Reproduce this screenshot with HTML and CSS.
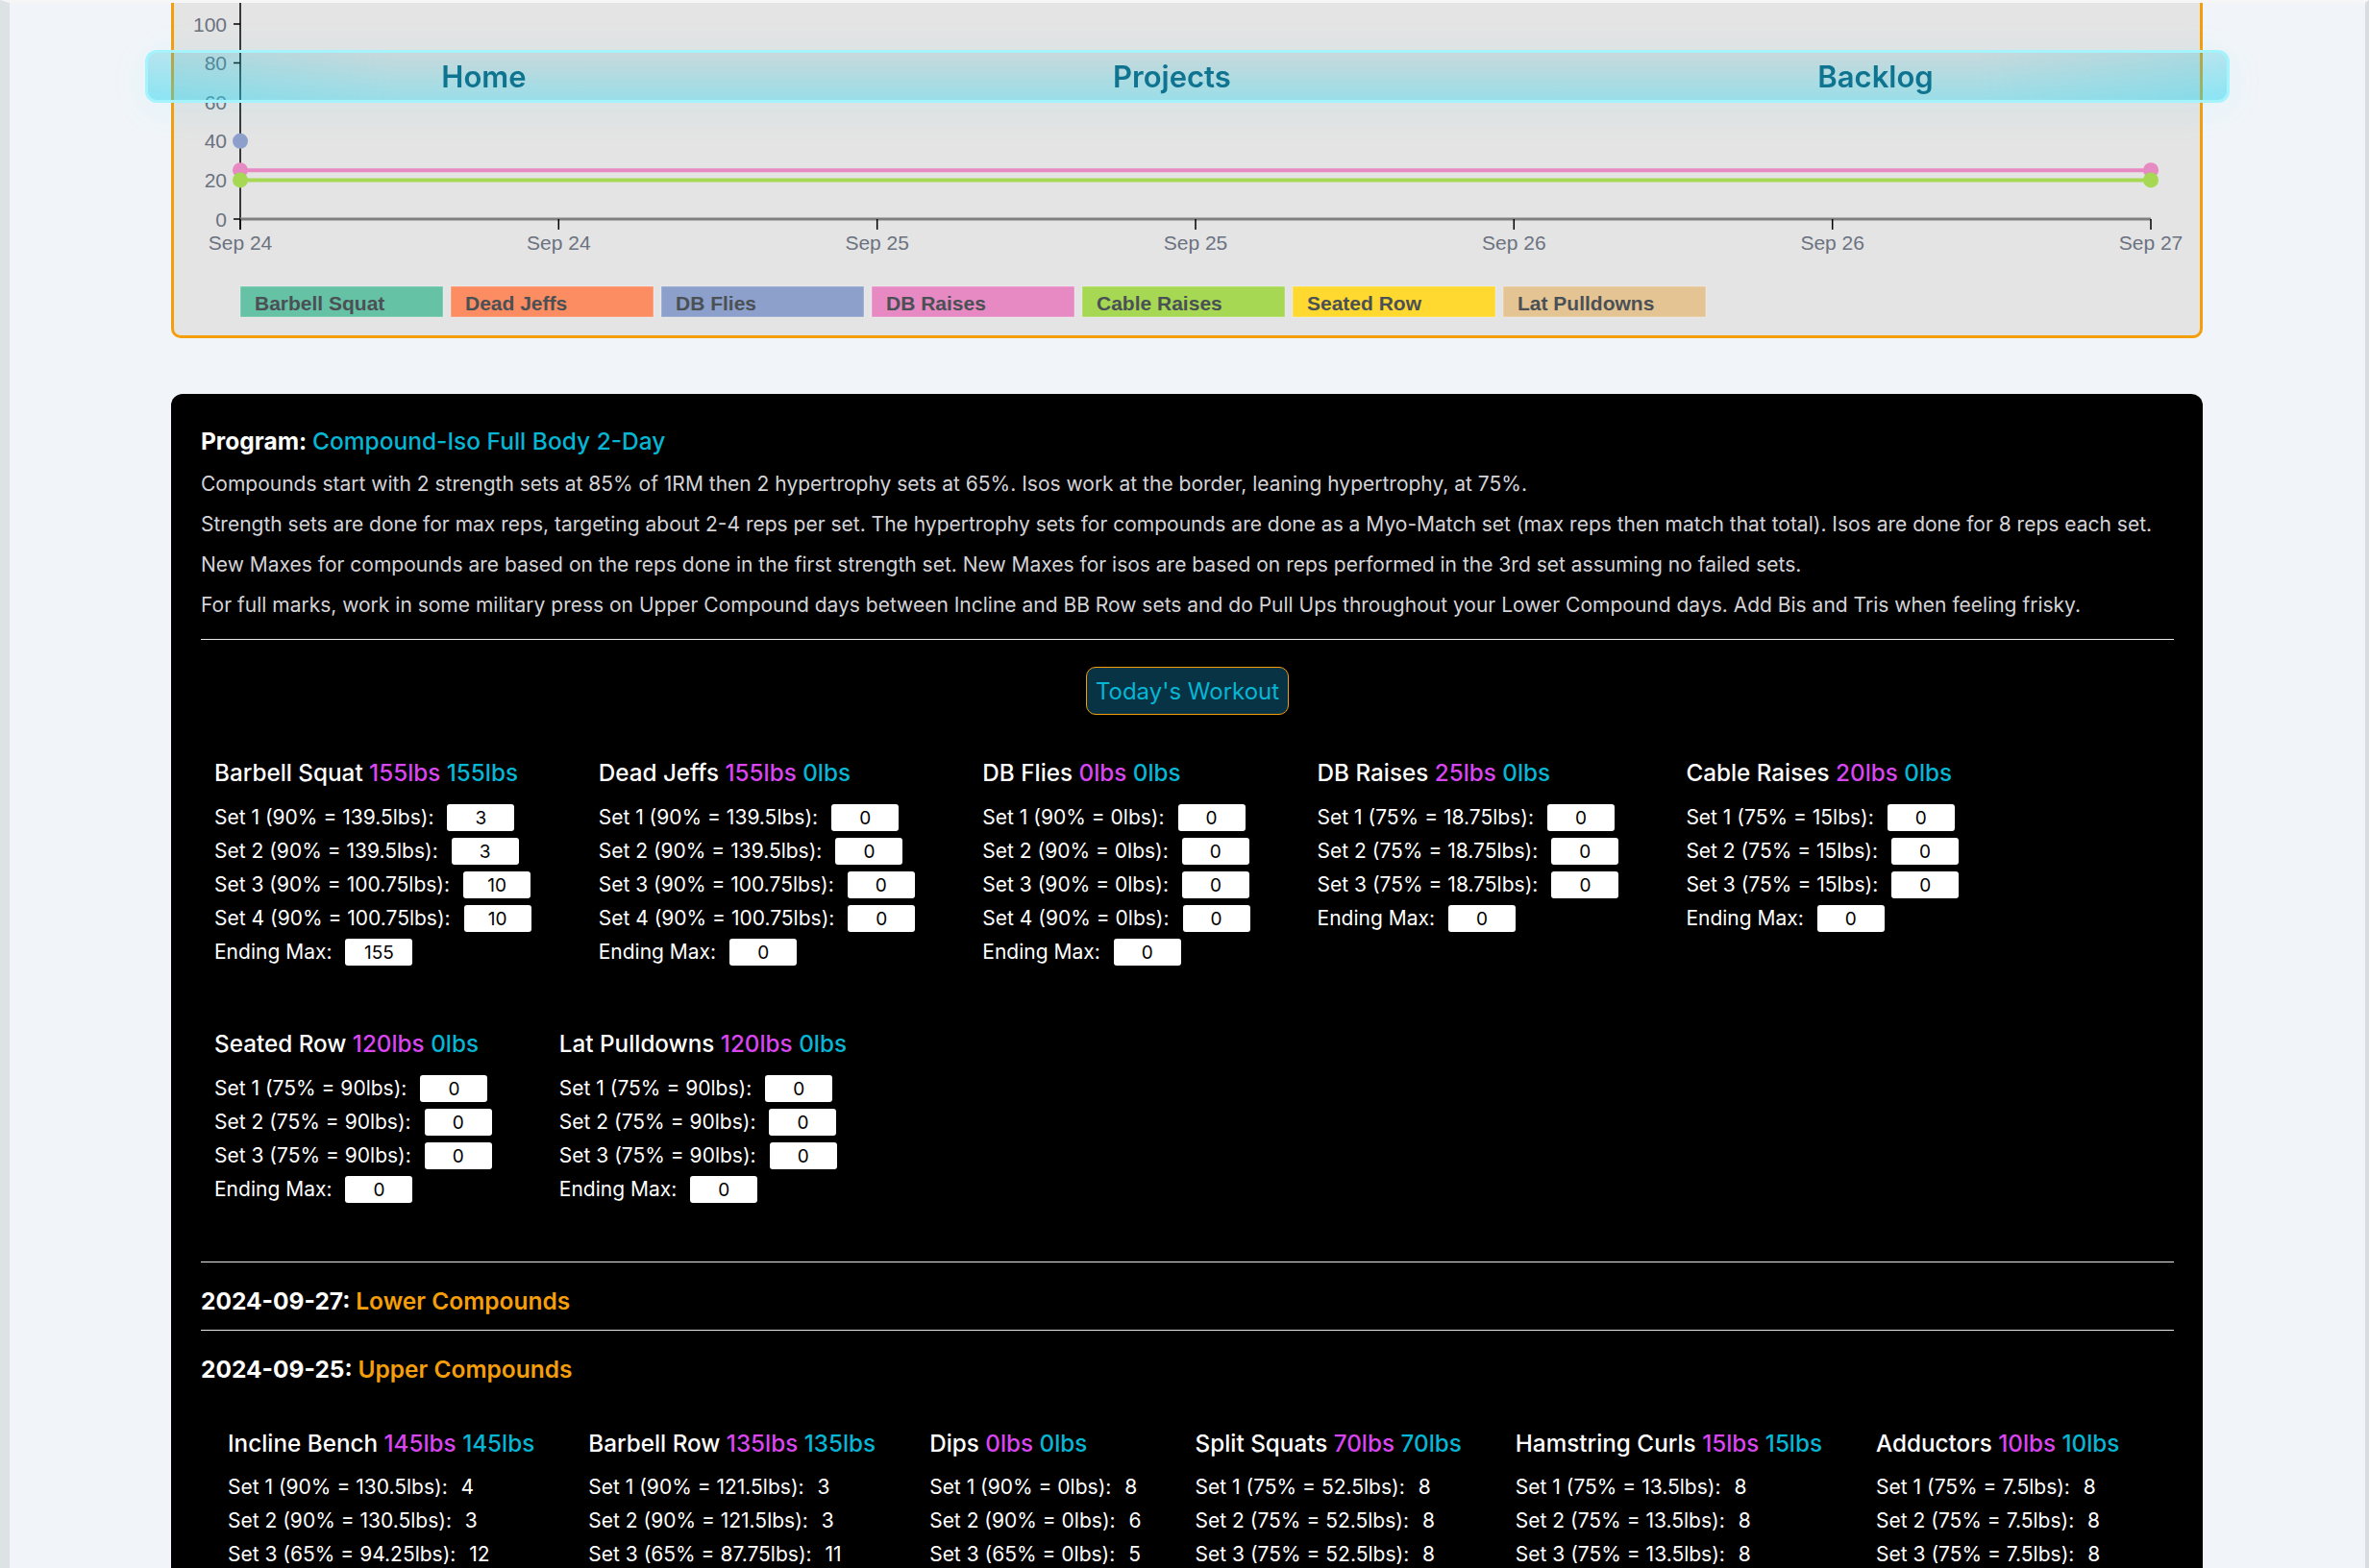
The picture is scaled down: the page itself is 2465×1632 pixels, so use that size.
FILE: index.html
```html
<!DOCTYPE html>
<html lang="en">
<head>
<meta charset="utf-8">
<title>Workout Tracker</title>
<link rel="stylesheet" href="styles.css">
</head>
<body>
<div class="frame">
  <nav class="topnav">
    <a class="nav-link" href="#">Home</a>
    <a class="nav-link" href="#">Projects</a>
    <a class="nav-link" href="#">Backlog</a>
  </nav>

  <main class="container">
    <section class="chart-card">
      <svg class="chart" width="2108" height="346" viewBox="0 0 2108 346" xmlns="http://www.w3.org/2000/svg">
        <g class="y-axis">
          <line x1="69" y1="0" x2="69" y2="236" stroke="#000" stroke-width="1.5"/>
          <line x1="62" y1="22" x2="69" y2="22" stroke="#000" stroke-width="1.5"/>
          <line x1="62" y1="62.6" x2="69" y2="62.6" stroke="#000" stroke-width="1.5"/>
          <line x1="62" y1="103.2" x2="69" y2="103.2" stroke="#000" stroke-width="1.5"/>
          <line x1="62" y1="143.8" x2="69" y2="143.8" stroke="#000" stroke-width="1.5"/>
          <line x1="62" y1="184.4" x2="69" y2="184.4" stroke="#000" stroke-width="1.5"/>
          <line x1="62" y1="225" x2="69" y2="225" stroke="#000" stroke-width="1.5"/>
          <text class="tick" x="55" y="29.5" text-anchor="end">100</text>
          <text class="tick" x="55" y="70" text-anchor="end">80</text>
          <text class="tick" x="55" y="110.7" text-anchor="end">60</text>
          <text class="tick" x="55" y="151.3" text-anchor="end">40</text>
          <text class="tick" x="55" y="191.9" text-anchor="end">20</text>
          <text class="tick" x="55" y="232.5" text-anchor="end">0</text>
        </g>
        <g class="x-axis">
          <line x1="69" y1="225" x2="2057" y2="225" stroke="#808080" stroke-width="3"/>
          <line x1="69" y1="225" x2="69" y2="236" stroke="#000" stroke-width="1.5"/>
          <line x1="400.3" y1="225" x2="400.3" y2="236" stroke="#000" stroke-width="1.5"/>
          <line x1="731.7" y1="225" x2="731.7" y2="236" stroke="#000" stroke-width="1.5"/>
          <line x1="1063" y1="225" x2="1063" y2="236" stroke="#000" stroke-width="1.5"/>
          <line x1="1394.3" y1="225" x2="1394.3" y2="236" stroke="#000" stroke-width="1.5"/>
          <line x1="1725.7" y1="225" x2="1725.7" y2="236" stroke="#000" stroke-width="1.5"/>
          <line x1="2057" y1="225" x2="2057" y2="236" stroke="#000" stroke-width="1.5"/>
          <text class="tick" x="69" y="256.5" text-anchor="middle">Sep 24</text>
          <text class="tick" x="400.3" y="256.5" text-anchor="middle">Sep 24</text>
          <text class="tick" x="731.7" y="256.5" text-anchor="middle">Sep 25</text>
          <text class="tick" x="1063" y="256.5" text-anchor="middle">Sep 25</text>
          <text class="tick" x="1394.3" y="256.5" text-anchor="middle">Sep 26</text>
          <text class="tick" x="1725.7" y="256.5" text-anchor="middle">Sep 26</text>
          <text class="tick" x="2057" y="256.5" text-anchor="middle">Sep 27</text>
        </g>
        <g class="series">
          <line x1="69" y1="174.2" x2="2057" y2="174.2" stroke="#e78ac3" stroke-width="4"/>
          <line x1="69" y1="184.4" x2="2057" y2="184.4" stroke="#a6d854" stroke-width="4"/>
          <circle cx="69" cy="143.8" r="8" fill="#8da0cb"/>
          <circle cx="69" cy="174.2" r="8" fill="#e78ac3"/>
          <circle cx="2057" cy="174.2" r="8" fill="#e78ac3"/>
          <circle cx="69" cy="184.4" r="8" fill="#a6d854"/>
          <circle cx="2057" cy="184.4" r="8" fill="#a6d854"/>
        </g>
        <g class="legend">
          <rect x="69" y="295" width="211" height="32" fill="#66c2a5" stroke="rgba(255,255,255,0.35)" stroke-width="1"/>
          <text class="legend-label" x="84" y="320">Barbell Squat</text>
          <rect x="288" y="295" width="211" height="32" fill="#fc8d62" stroke="rgba(255,255,255,0.35)" stroke-width="1"/>
          <text class="legend-label" x="303" y="320">Dead Jeffs</text>
          <rect x="507" y="295" width="211" height="32" fill="#8da0cb" stroke="rgba(255,255,255,0.35)" stroke-width="1"/>
          <text class="legend-label" x="522" y="320">DB Flies</text>
          <rect x="726" y="295" width="211" height="32" fill="#e78ac3" stroke="rgba(255,255,255,0.35)" stroke-width="1"/>
          <text class="legend-label" x="741" y="320">DB Raises</text>
          <rect x="945" y="295" width="211" height="32" fill="#a6d854" stroke="rgba(255,255,255,0.35)" stroke-width="1"/>
          <text class="legend-label" x="960" y="320">Cable Raises</text>
          <rect x="1164" y="295" width="211" height="32" fill="#ffd92f" stroke="rgba(255,255,255,0.35)" stroke-width="1"/>
          <text class="legend-label" x="1179" y="320">Seated Row</text>
          <rect x="1383" y="295" width="211" height="32" fill="#e5c494" stroke="rgba(255,255,255,0.35)" stroke-width="1"/>
          <text class="legend-label" x="1398" y="320">Lat Pulldowns</text>
        </g>
      </svg>
    </section>

    <section class="program-card">
      <h2 class="program-title">Program: <span class="accent-cyan">Compound-Iso Full Body 2-Day</span></h2>
      <p class="desc">Compounds start with 2 strength sets at 85% of 1RM then 2 hypertrophy sets at 65%. Isos work at the border, leaning hypertrophy, at 75%.</p>
      <p class="desc">Strength sets are done for max reps, targeting about 2-4 reps per set. The hypertrophy sets for compounds are done as a Myo-Match set (max reps then match that total). Isos are done for 8 reps each set.</p>
      <p class="desc">New Maxes for compounds are based on the reps done in the first strength set. New Maxes for isos are based on reps performed in the 3rd set assuming no failed sets.</p>
      <p class="desc">For full marks, work in some military press on Upper Compound days between Incline and BB Row sets and do Pull Ups throughout your Lower Compound days. Add Bis and Tris when feeling frisky.</p>

      <hr class="rule rule-top">

      <div class="btn-row">
        <button class="today-btn" type="button">Today's Workout</button>
      </div>

      <div class="today-grid">
        <div class="ex">
          <h3 class="ex-title">Barbell Squat <span class="accent-mag">155lbs</span> <span class="accent-cyan">155lbs</span></h3>
          <div class="set-row"><label>Set 1 (90% = 139.5lbs):</label><input class="rep" type="text" value="3"></div>
          <div class="set-row"><label>Set 2 (90% = 139.5lbs):</label><input class="rep" type="text" value="3"></div>
          <div class="set-row"><label>Set 3 (90% = 100.75lbs):</label><input class="rep" type="text" value="10"></div>
          <div class="set-row"><label>Set 4 (90% = 100.75lbs):</label><input class="rep" type="text" value="10"></div>
          <div class="set-row"><label>Ending Max:</label><input class="rep" type="text" value="155"></div>
        </div>
        <div class="ex">
          <h3 class="ex-title">Dead Jeffs <span class="accent-mag">155lbs</span> <span class="accent-cyan">0lbs</span></h3>
          <div class="set-row"><label>Set 1 (90% = 139.5lbs):</label><input class="rep" type="text" value="0"></div>
          <div class="set-row"><label>Set 2 (90% = 139.5lbs):</label><input class="rep" type="text" value="0"></div>
          <div class="set-row"><label>Set 3 (90% = 100.75lbs):</label><input class="rep" type="text" value="0"></div>
          <div class="set-row"><label>Set 4 (90% = 100.75lbs):</label><input class="rep" type="text" value="0"></div>
          <div class="set-row"><label>Ending Max:</label><input class="rep" type="text" value="0"></div>
        </div>
        <div class="ex">
          <h3 class="ex-title">DB Flies <span class="accent-mag">0lbs</span> <span class="accent-cyan">0lbs</span></h3>
          <div class="set-row"><label>Set 1 (90% = 0lbs):</label><input class="rep" type="text" value="0"></div>
          <div class="set-row"><label>Set 2 (90% = 0lbs):</label><input class="rep" type="text" value="0"></div>
          <div class="set-row"><label>Set 3 (90% = 0lbs):</label><input class="rep" type="text" value="0"></div>
          <div class="set-row"><label>Set 4 (90% = 0lbs):</label><input class="rep" type="text" value="0"></div>
          <div class="set-row"><label>Ending Max:</label><input class="rep" type="text" value="0"></div>
        </div>
        <div class="ex">
          <h3 class="ex-title">DB Raises <span class="accent-mag">25lbs</span> <span class="accent-cyan">0lbs</span></h3>
          <div class="set-row"><label>Set 1 (75% = 18.75lbs):</label><input class="rep" type="text" value="0"></div>
          <div class="set-row"><label>Set 2 (75% = 18.75lbs):</label><input class="rep" type="text" value="0"></div>
          <div class="set-row"><label>Set 3 (75% = 18.75lbs):</label><input class="rep" type="text" value="0"></div>
          <div class="set-row"><label>Ending Max:</label><input class="rep" type="text" value="0"></div>
        </div>
        <div class="ex">
          <h3 class="ex-title">Cable Raises <span class="accent-mag">20lbs</span> <span class="accent-cyan">0lbs</span></h3>
          <div class="set-row"><label>Set 1 (75% = 15lbs):</label><input class="rep" type="text" value="0"></div>
          <div class="set-row"><label>Set 2 (75% = 15lbs):</label><input class="rep" type="text" value="0"></div>
          <div class="set-row"><label>Set 3 (75% = 15lbs):</label><input class="rep" type="text" value="0"></div>
          <div class="set-row"><label>Ending Max:</label><input class="rep" type="text" value="0"></div>
        </div>
        <div class="ex">
          <h3 class="ex-title">Seated Row <span class="accent-mag">120lbs</span> <span class="accent-cyan">0lbs</span></h3>
          <div class="set-row"><label>Set 1 (75% = 90lbs):</label><input class="rep" type="text" value="0"></div>
          <div class="set-row"><label>Set 2 (75% = 90lbs):</label><input class="rep" type="text" value="0"></div>
          <div class="set-row"><label>Set 3 (75% = 90lbs):</label><input class="rep" type="text" value="0"></div>
          <div class="set-row"><label>Ending Max:</label><input class="rep" type="text" value="0"></div>
        </div>
        <div class="ex">
          <h3 class="ex-title">Lat Pulldowns <span class="accent-mag">120lbs</span> <span class="accent-cyan">0lbs</span></h3>
          <div class="set-row"><label>Set 1 (75% = 90lbs):</label><input class="rep" type="text" value="0"></div>
          <div class="set-row"><label>Set 2 (75% = 90lbs):</label><input class="rep" type="text" value="0"></div>
          <div class="set-row"><label>Set 3 (75% = 90lbs):</label><input class="rep" type="text" value="0"></div>
          <div class="set-row"><label>Ending Max:</label><input class="rep" type="text" value="0"></div>
        </div>
      </div>

      <hr class="rule">
      <h3 class="day">2024-09-27: <span class="accent-orange">Lower Compounds</span></h3>
      <hr class="rule">
      <h3 class="day">2024-09-25: <span class="accent-orange">Upper Compounds</span></h3>

      <div class="hist-grid">
        <div class="hist-ex">
          <h4 class="ex-title">Incline Bench <span class="accent-mag">145lbs</span> <span class="accent-cyan">145lbs</span></h4>
          <p class="hist-set">Set 1 (90% = 130.5lbs): <span class="hist-val">4</span></p>
          <p class="hist-set">Set 2 (90% = 130.5lbs): <span class="hist-val">3</span></p>
          <p class="hist-set">Set 3 (65% = 94.25lbs): <span class="hist-val">12</span></p>
        </div>
        <div class="hist-ex">
          <h4 class="ex-title">Barbell Row <span class="accent-mag">135lbs</span> <span class="accent-cyan">135lbs</span></h4>
          <p class="hist-set">Set 1 (90% = 121.5lbs): <span class="hist-val">3</span></p>
          <p class="hist-set">Set 2 (90% = 121.5lbs): <span class="hist-val">3</span></p>
          <p class="hist-set">Set 3 (65% = 87.75lbs): <span class="hist-val">11</span></p>
        </div>
        <div class="hist-ex">
          <h4 class="ex-title">Dips <span class="accent-mag">0lbs</span> <span class="accent-cyan">0lbs</span></h4>
          <p class="hist-set">Set 1 (90% = 0lbs): <span class="hist-val">8</span></p>
          <p class="hist-set">Set 2 (90% = 0lbs): <span class="hist-val">6</span></p>
          <p class="hist-set">Set 3 (65% = 0lbs): <span class="hist-val">5</span></p>
        </div>
        <div class="hist-ex">
          <h4 class="ex-title">Split Squats <span class="accent-mag">70lbs</span> <span class="accent-cyan">70lbs</span></h4>
          <p class="hist-set">Set 1 (75% = 52.5lbs): <span class="hist-val">8</span></p>
          <p class="hist-set">Set 2 (75% = 52.5lbs): <span class="hist-val">8</span></p>
          <p class="hist-set">Set 3 (75% = 52.5lbs): <span class="hist-val">8</span></p>
        </div>
        <div class="hist-ex">
          <h4 class="ex-title">Hamstring Curls <span class="accent-mag">15lbs</span> <span class="accent-cyan">15lbs</span></h4>
          <p class="hist-set">Set 1 (75% = 13.5lbs): <span class="hist-val">8</span></p>
          <p class="hist-set">Set 2 (75% = 13.5lbs): <span class="hist-val">8</span></p>
          <p class="hist-set">Set 3 (75% = 13.5lbs): <span class="hist-val">8</span></p>
        </div>
        <div class="hist-ex">
          <h4 class="ex-title">Adductors <span class="accent-mag">10lbs</span> <span class="accent-cyan">10lbs</span></h4>
          <p class="hist-set">Set 1 (75% = 7.5lbs): <span class="hist-val">8</span></p>
          <p class="hist-set">Set 2 (75% = 7.5lbs): <span class="hist-val">8</span></p>
          <p class="hist-set">Set 3 (75% = 7.5lbs): <span class="hist-val">8</span></p>
        </div>
      </div>
    </section>
  </main>
</div>
</body>
</html>
```

FILE: styles.css
```css
* { box-sizing: border-box; }

html, body {
  margin: 0;
  padding: 0;
  background: #f1f5f9;
}

body {
  font-family: "Inter", "Noto Sans", sans-serif;
  overflow: hidden;
}

.frame {
  border-left: 10px solid #dde2e5;
  border-right: 4px solid #d9dde0;
  border-top: 3px solid #f6f6f6;
  min-height: 1632px;
  background: #f1f5f9;
}

/* floating glass nav */
.topnav {
  position: fixed;
  top: 52px;
  left: 151px;
  width: 2169px;
  height: 55px;
  display: flex;
  justify-content: space-around;
  align-items: center;
  border: 3px solid #a5f3fc;
  border-radius: 12px;
  background:
    linear-gradient(to right, rgba(34, 211, 238, 0.18), rgba(34, 211, 238, 0) 12%, rgba(34, 211, 238, 0) 88%, rgba(34, 211, 238, 0.18)),
    linear-gradient(to bottom, rgba(0, 140, 160, 0.12), rgba(34, 211, 238, 0.38));
  box-shadow: 0 6px 40px rgba(34, 211, 238, 0.08);
  z-index: 10;
}

.nav-link {
  font-family: "Inter", sans-serif;
  font-size: 31px;
  font-weight: 600;
  color: #0e7490;
  text-decoration: none;
  line-height: 1;
}

.container {
  padding: 0 169px 0 168px;
}

/* chart card */
.chart-card {
  background: #e4e4e4;
  border: 3px solid #f59e0b;
  border-top: none;
  border-radius: 0 0 10px 10px;
  height: 349px;
  overflow: hidden;
}

.chart {
  display: block;
}

.tick {
  font-family: "Liberation Sans", Arial, sans-serif;
  font-size: 21px;
  fill: #6b7280;
}

.legend-label {
  font-family: "Liberation Sans", Arial, sans-serif;
  font-size: 21px;
  font-weight: 700;
  fill: #4b5055;
}

/* program card */
.program-card {
  margin-top: 58px;
  background: #000;
  color: #fff;
  border-radius: 12px 12px 0 0;
  padding: 32px 30px 200px 31px;
}

.program-title {
  margin: 0;
  font-size: 24.5px;
  line-height: 34px;
  font-weight: 700;
}

.program-title .accent-cyan {
  font-weight: 500;
}

.desc {
  margin: 14px 0 0;
  font-size: 21px;
  line-height: 28px;
  color: #d4d4d8;
}

.rule {
  border: 0;
  border-top: 1.5px solid #e5e7eb;
  margin: 0;
  height: 0;
}

.rule-top {
  margin-top: 21px;
}

.btn-row {
  display: flex;
  justify-content: center;
  margin-top: 28px;
}

.today-btn {
  height: 50px;
  padding: 0 9px;
  background: #083344;
  border: 1.5px solid #f59e0b;
  border-radius: 10px;
  color: #06b6d4;
  font-family: "Inter", sans-serif;
  font-size: 24px;
  font-weight: 400;
}

.accent-cyan { color: #06b6d4; }
.accent-mag { color: #d946ef; }
.accent-orange { color: #f59e0b; }

.today-grid {
  display: flex;
  flex-wrap: wrap;
  column-gap: 42px;
  row-gap: 66px;
  margin-top: 45px;
  margin-bottom: 61px;
}

.ex {
  padding: 0 14px;
}

.ex-title {
  margin: 0 0 16px;
  font-size: 24.25px;
  line-height: 32px;
  font-weight: 500;
  white-space: nowrap;
}

.set-row {
  display: flex;
  align-items: center;
  margin-top: 7px;
  height: 28px;
  font-size: 21px;
  white-space: nowrap;
}

.ex-title + .set-row {
  margin-top: 0;
}

.set-row label {
  line-height: 28px;
}

.rep {
  width: 70px;
  height: 28px;
  margin-left: 14px;
  border: 0;
  border-radius: 3px;
  background: #fff;
  color: #000;
  text-align: center;
  font-family: "Inter", sans-serif;
  font-size: 19px;
  padding: 0;
}

.day {
  margin: 23px 0 13px;
  font-size: 24.5px;
  line-height: 34px;
  font-weight: 700;
}

.day .accent-orange {
  font-weight: 600;
}

.hist-grid {
  display: flex;
  flex-wrap: wrap;
  margin-top: 45px;
}

.hist-ex {
  padding: 0 28px;
}

.hist-ex .ex-title {
  margin-bottom: 15px;
}

.hist-set {
  margin: 7px 0 0;
  font-size: 21px;
  line-height: 28px;
  white-space: nowrap;
}

.ex-title + .hist-set {
  margin-top: 0;
}

.hist-val {
  margin-left: 8px;
}
```
